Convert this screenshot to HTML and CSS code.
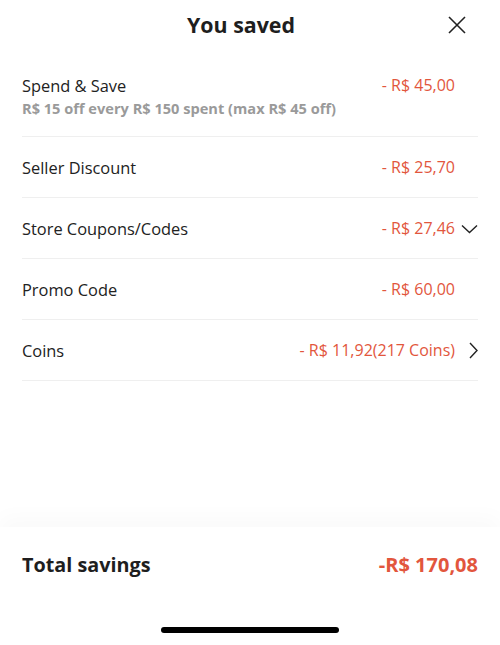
FILE: index.html
```html
<!DOCTYPE html>
<html lang="en">
<head>
<meta charset="utf-8">
<title>You saved</title>
<link rel="stylesheet" href="styles.css">
</head>
<body>
<div class="sheet">
  <header class="header">
    <span></span>
    <h1 class="title">You saved</h1>
    <button class="close" aria-label="Close">
      <svg width="18" height="18" viewBox="0 0 18 18"><path d="M1 1L17 17M17 1L1 17" stroke="#222" stroke-width="1.6" fill="none"/></svg>
    </button>
  </header>
  <ul class="list">
    <li class="row">
      <div class="label">
        <div class="name">Spend &amp; Save</div>
        <div class="sub">R$ 15 off every R$ 150 spent (max R$ 45 off)</div>
      </div>
      <div class="amount">- R$ 45,00</div>
      <span class="icon-slot"></span>
    </li>
    <li class="row">
      <div class="label"><div class="name">Seller Discount</div></div>
      <div class="amount">- R$ 25,70</div>
      <span class="icon-slot"></span>
    </li>
    <li class="row">
      <div class="label"><div class="name">Store Coupons/Codes</div></div>
      <div class="amount">- R$ 27,46</div>
      <span class="icon-slot">
        <svg width="17" height="10" viewBox="0 0 17 10"><path d="M1 1.5L8.5 8.5L16 1.5" stroke="#222" stroke-width="1.4" fill="none"/></svg>
      </span>
    </li>
    <li class="row">
      <div class="label"><div class="name">Promo Code</div></div>
      <div class="amount">- R$ 60,00</div>
      <span class="icon-slot"></span>
    </li>
    <li class="row">
      <div class="label"><div class="name">Coins</div></div>
      <div class="amount">- R$ 11,92(217 Coins)</div>
      <span class="icon-slot">
        <svg width="10" height="17" viewBox="0 0 10 17"><path d="M2 1L9 8.5L2 16" stroke="#222" stroke-width="1.4" fill="none"/></svg>
      </span>
    </li>
  </ul>
  <div class="spacer"></div>
  <footer class="footer">
    <div class="total">
      <span class="total-label">Total savings</span>
      <span class="total-amount">-R$ 170,08</span>
    </div>
    <div class="home-indicator"></div>
  </footer>
</div>
</body>
</html>
```

FILE: styles.css
```css
* { box-sizing: border-box; }
html, body { margin: 0; padding: 0; background: #fff; }
body {
  font-family: "Open Sans", "Noto Sans", sans-serif;
  color: #222;
}
.sheet {
  width: 500px;
  height: 645px;
  display: flex;
  flex-direction: column;
  background: #fff;
}
.header {
  height: 55px;
  display: grid;
  grid-template-columns: 1fr auto 1fr;
  align-items: start;
  padding-top: 10px;
}
.title {
  margin: 0 18px 0 0;
  font-size: 21.4px;
  font-weight: 700;
  line-height: 30px;
  color: #1e1e1e;
}
.close {
  justify-self: end;
  margin-right: 34px;
  margin-top: 6px;
  padding: 0;
  border: 0;
  background: none;
  width: 18px;
  height: 18px;
  display: flex;
}
.list {
  list-style: none;
  margin: 0;
  padding: 0 22px;
}
.row {
  display: flex;
  align-items: flex-start;
  padding: 19px 0 18px;
  border-bottom: 1px solid #efefef;
}
.label { flex: 1; }
.name {
  font-size: 16.4px;
  line-height: 23px;
  color: #222;
}
.sub {
  font-size: 14.6px;
  font-weight: 700;
  line-height: 20px;
  color: #9a9a9a;
  margin-top: 1px;
}
.amount {
  font-size: 16px;
  line-height: 23px;
  color: #e2563d;
}
.icon-slot {
  width: 23px;
  height: 23px;
  display: flex;
  align-items: center;
  justify-content: flex-end;
}
.spacer { flex: 1; }
.footer {
  position: relative;
  height: 118px;
  padding: 23px 22px 0;
  background: #fff;
  box-shadow: 0 -10px 20px rgba(0, 0, 0, 0.025);
}
.total {
  display: flex;
  justify-content: space-between;
  align-items: center;
  height: 28px;
}
.total-label {
  font-size: 19.8px;
  font-weight: 700;
  color: #1e1e1e;
}
.total-amount {
  font-size: 20px;
  font-weight: 700;
  color: #e2563d;
}
.home-indicator {
  width: 178px;
  height: 6px;
  border-radius: 3px;
  background: #000;
  margin: 49px auto 0;
}
```
